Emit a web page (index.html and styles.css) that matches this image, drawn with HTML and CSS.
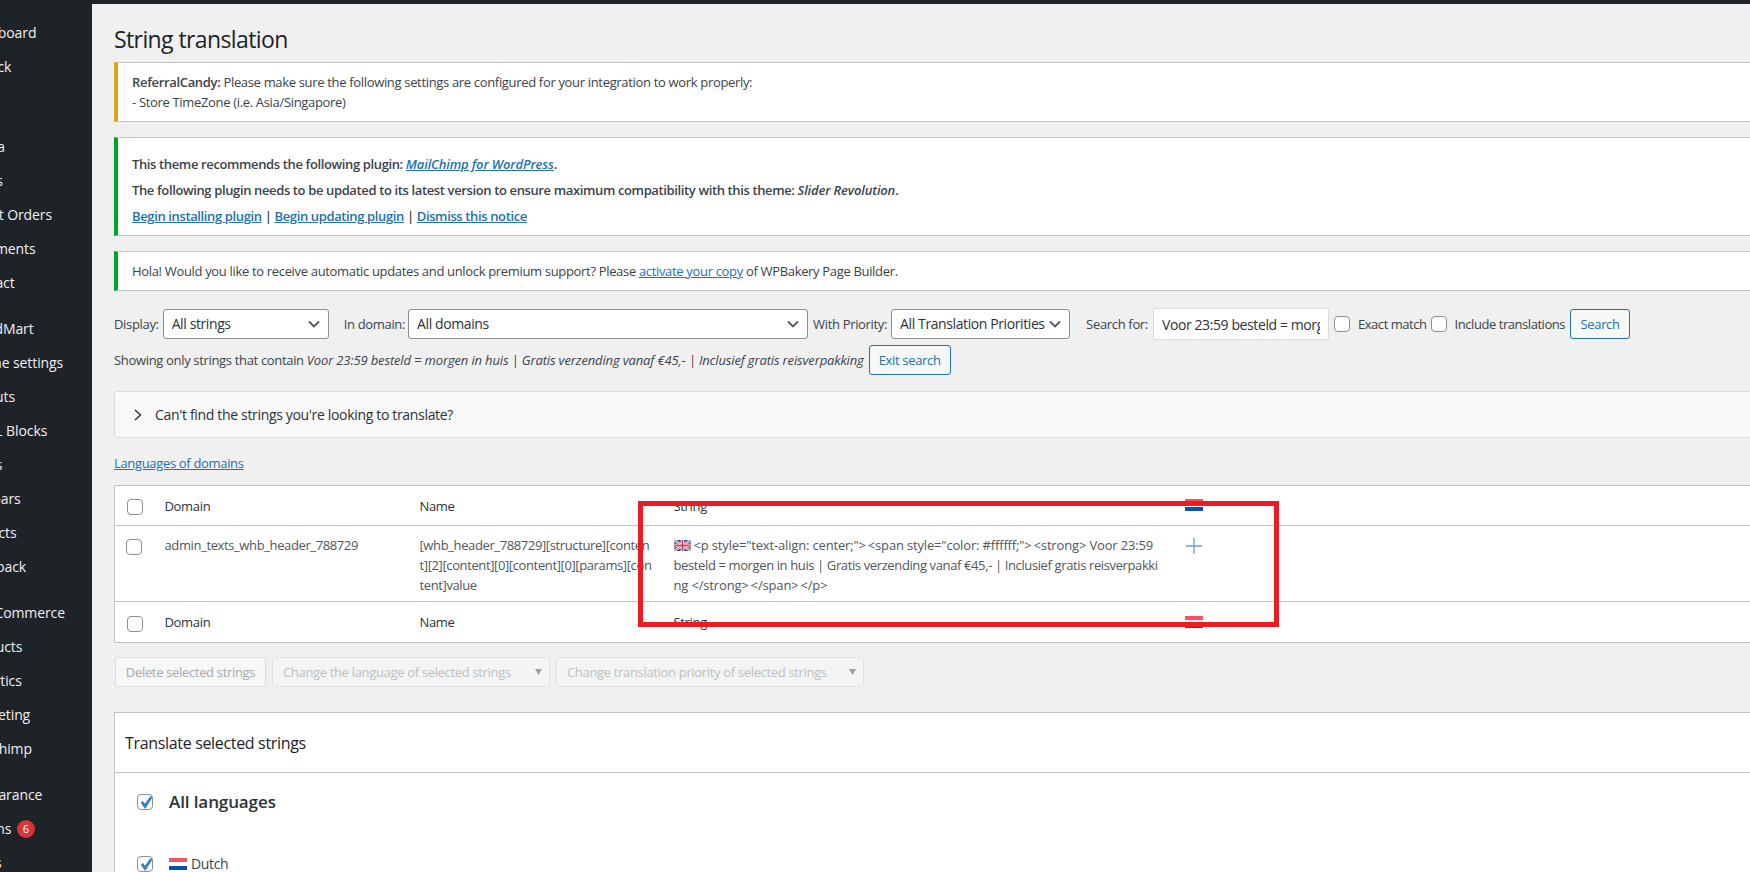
FILE: index.html
```html
<!DOCTYPE html>
<html lang="en">
<head>
    <meta charset="UTF-8">
    <meta name="viewport" content="width=device-width, initial-scale=1.0">
    <title>String translation</title>
    <link rel="stylesheet" href="styles.css">
</head>
<body>
    <div class="top-bar"></div>
    <div class="layout">
        <nav class="sidebar">
            <ul class="menu">
                <li>Dashboard</li>
                <li>Jetpack</li>
                <li class="gap-lg">Media</li>
                <li>Pages</li>
                <li>Smart Orders</li>
                <li>Comments</li>
                <li>Contact</li>
                <li class="gap">WoodMart</li>
                <li>Theme settings</li>
                <li>Layouts</li>
                <li>HTML Blocks</li>
                <li>Slides</li>
                <li>Sidebars</li>
                <li>Projects</li>
                <li>Feedback</li>
                <li class="gap">WooCommerce</li>
                <li>Products</li>
                <li>Analytics</li>
                <li>Marketing</li>
                <li>Mailchimp</li>
                <li class="gap">Appearance</li>
                <li>Plugins <span class="badge">6</span></li>
                <li>Users</li>
            </ul>
        </nav>

        <main class="wrap">
            <h1 class="page-title">String translation</h1>

            <div class="notice notice-warning">
                <p><strong class="medium">ReferralCandy:</strong> Please make sure the following settings are configured for your integration to work properly:<br>- Store TimeZone (i.e. Asia/Singapore)</p>
            </div>

            <div class="notice notice-success notice-tgm">
                <p class="medium">This theme recommends the following plugin: <a href="#"><em>MailChimp for WordPress</em></a>.</p>
                <p class="medium">The following plugin needs to be updated to its latest version to ensure maximum compatibility with this theme: <em>Slider Revolution</em>.</p>
                <p class="medium"><a href="#">Begin installing plugin</a> | <a href="#">Begin updating plugin</a> | <a href="#">Dismiss this notice</a></p>
            </div>

            <div class="notice notice-success notice-short">
                <p>Hola! Would you like to receive automatic updates and unlock premium support? Please <a href="#">activate your copy</a> of WPBakery Page Builder.</p>
            </div>

            <form class="filters">
                <label class="filter-label">Display:</label>
                <select class="select select-display"><option>All strings</option></select>
                <label class="filter-label label-domain">In domain:</label>
                <select class="select select-domain"><option>All domains</option></select>
                <label class="filter-label label-priority">With Priority:</label>
                <select class="select select-priority"><option>All Translation Priorities</option></select>
                <label class="filter-label label-search">Search for:</label>
                <input class="search-input" type="text" value="Voor 23:59 besteld = morgen in huis | Gratis verzending vanaf €45,- | Inclusief gratis reisverpakking">
                <input class="checkbox check-exact" type="checkbox">
                <label class="filter-label label-exact">Exact match</label>
                <input class="checkbox" type="checkbox">
                <label class="filter-label label-include">Include translations</label>
                <button class="btn btn-search" type="button">Search</button>
            </form>

            <div class="search-summary">
                <span>Showing only strings that contain <em>Voor 23:59 besteld = morgen in huis | Gratis verzending vanaf €45,- | Inclusief gratis reisverpakking</em></span>
                <button class="btn btn-exit" type="button">Exit search</button>
            </div>

            <div class="accordion">
                <svg class="chevron" width="8" height="12" viewBox="0 0 8 12"><path d="M1 1l5.5 5L1 11" fill="none" stroke="#1d2327" stroke-width="1.2"/></svg>
                <span>Can't find the strings you're looking to translate?</span>
            </div>

            <p class="domains-link"><a href="#">Languages of domains</a></p>

            <table class="strings-table">
                <colgroup>
                    <col class="col-check">
                    <col class="col-domain">
                    <col class="col-name">
                    <col class="col-string">
                    <col>
                </colgroup>
                <thead>
                    <tr>
                        <th class="cell-check"><input class="checkbox" type="checkbox"></th>
                        <th>Domain</th>
                        <th>Name</th>
                        <th>String</th>
                        <th class="cell-flag"><svg class="flag-nl" viewBox="0 0 18 12"><rect width="18" height="4" fill="#f9525f"/><rect y="4" width="18" height="4" fill="#fff"/><rect y="8" width="18" height="4" fill="#0b4fb3"/></svg></th>
                    </tr>
                </thead>
                <tbody>
                    <tr>
                        <td class="cell-check cell-check-row"><input class="checkbox" type="checkbox"></td>
                        <td class="cell-text">admin_texts_whb_header_788729</td>
                        <td class="cell-text">[whb_header_788729][structure][conten<br>t][2][content][0][content][0][params][con<br>tent]value</td>
                        <td class="cell-text">
                            <svg class="flag-uk" viewBox="0 0 18 12">
                                <rect width="18" height="12" fill="#2b4c9b"/>
                                <path d="M0 0l18 12M18 0L0 12" stroke="#fff" stroke-width="2.4"/>
                                <path d="M0 0l18 12M18 0L0 12" stroke="#d8414f" stroke-width="1"/>
                                <path d="M9 0v12M0 6h18" stroke="#fff" stroke-width="4"/>
                                <path d="M9 0v12M0 6h18" stroke="#d8414f" stroke-width="2"/>
                            </svg>
                            <span class="tag-text">&lt;p style="text-align: center;"&gt;&thinsp;&lt;span style="color: #ffffff;"&gt;&thinsp;&lt;strong&gt;&nbsp;Voor 23:59</span><br>besteld = morgen in huis | Gratis verzending vanaf €45,- | Inclusief gratis reisverpakki<br><span class="tag-text">ng &lt;/strong&gt;&thinsp;&lt;/span&gt;&thinsp;&lt;/p&gt;</span>
                        </td>
                        <td><svg class="plus" viewBox="0 0 16 16"><path d="M8 0v16M0 8h16" stroke="#6f9fca" stroke-width="1.3"/></svg></td>
                    </tr>
                </tbody>
                <tfoot>
                    <tr>
                        <th class="cell-check"><input class="checkbox" type="checkbox"></th>
                        <th>Domain</th>
                        <th>Name</th>
                        <th>String</th>
                        <th class="cell-flag"><svg class="flag-nl" viewBox="0 0 18 12"><rect width="18" height="4" fill="#f9525f"/><rect y="4" width="18" height="4" fill="#f0f0f1"/><rect y="8" width="18" height="4" fill="#0b4fb3"/></svg></th>
                    </tr>
                </tfoot>
            </table>

            <div class="bulk-actions">
                <button class="bulk-btn" type="button" disabled>Delete selected strings</button>
                <select class="bulk-select bulk-language" disabled><option>Change the language of selected strings</option></select>
                <select class="bulk-select bulk-priority" disabled><option>Change translation priority of selected strings</option></select>
            </div>

            <section class="translate-box">
                <h2 class="box-title">Translate selected strings</h2>
                <div class="box-body">
                    <div class="lang-row lang-all">
                        <input class="checkbox" type="checkbox" checked>
                        <strong>All languages</strong>
                    </div>
                    <div class="lang-row">
                        <input class="checkbox" type="checkbox" checked>
                        <svg class="flag-nl" viewBox="0 0 18 12"><rect width="18" height="4" fill="#f9525f"/><rect y="4" width="18" height="4" fill="#fff"/><rect y="8" width="18" height="4" fill="#0b4fb3"/></svg>
                        <span class="lang-name">Dutch</span>
                    </div>
                </div>
            </section>
        </main>
    </div>

    <div class="highlight-box"></div>
</body>
</html>
```

FILE: styles.css
```css
* {
    margin: 0;
    padding: 0;
    box-sizing: border-box;
}
html, body {
    width: 1750px;
    height: 872px;
    overflow: hidden;
}
body {
    font-family: "Open Sans", "Noto Sans", sans-serif;
    font-size: 13px;
    line-height: 20px;
    letter-spacing: -0.33px;
    background-color: #f0f0f1;
    color: #3c434a;
    position: relative;
}
a {
    color: #2271b1;
}
em {
    letter-spacing: -0.15px;
}
.top-bar {
    height: 4px;
    background-color: #1d2327;
}
.layout {
    display: flex;
    height: 868px;
}

/* sidebar, scrolled off to the left in the screenshot */
.sidebar {
    width: 92px;
    flex-shrink: 0;
    background-color: #1d2327;
    overflow: hidden;
    color: #f0f0f1;
    font-size: 14px;
    letter-spacing: -0.1px;
}
.menu {
    list-style: none;
    margin-left: -35px;
    padding-top: 12px;
}
.menu li {
    height: 34px;
    line-height: 34px;
    white-space: nowrap;
}
.menu .gap {
    margin-top: 12px;
}
.menu .gap-lg {
    margin-top: 46px;
}
.badge {
    display: inline-block;
    width: 18px;
    height: 18px;
    margin-left: 2px;
    border-radius: 9px;
    background-color: #d63638;
    color: #fff;
    font-size: 11px;
    line-height: 18px;
    text-align: center;
    vertical-align: 1px;
}

/* main column runs past the right edge of the window */
.wrap {
    flex: none;
    width: 1700px;
    padding-left: 22px;
}
.page-title {
    font-size: 23px;
    font-weight: 400;
    line-height: 30px;
    letter-spacing: -0.6px;
    color: #1d2327;
    padding-top: 20px;
    height: 58px;
}
.notice {
    background-color: #fff;
    border: 1px solid #c3c4c7;
    border-left-width: 4px;
    margin-bottom: 15px;
    padding: 9px 14px 9px 14px;
}
.notice-warning {
    border-left-color: #dba617;
    height: 60px;
}
.notice-success {
    border-left-color: #00a32a;
}
.notice-tgm {
    height: 99px;
    padding-top: 16px;
    letter-spacing: -0.37px;
}
.notice-tgm p {
    margin-bottom: 6px;
}
.notice-short {
    height: 40px;
    margin-bottom: 0;
}
.medium {
    font-weight: 600;
}

.filters {
    display: flex;
    align-items: center;
    height: 32px;
    margin-top: 17px;
    white-space: nowrap;
}
.select {
    height: 30px;
    border: 1px solid #8c8f94;
    border-radius: 3px;
    background: #fff url("data:image/svg+xml,%3Csvg xmlns='http://www.w3.org/2000/svg' width='12' height='8'%3E%3Cpath d='M1 1.5l5 5 5-5' fill='none' stroke='%2350575e' stroke-width='1.8'/%3E%3C/svg%3E") no-repeat right 8px center;
    appearance: none;
    font: inherit;
    font-size: 14px;
    letter-spacing: -0.4px;
    color: #2c3338;
    padding: 0 20px 0 8px;
}
.select-display {
    width: 166px;
    margin-left: 4px;
}
.label-domain {
    margin-left: 15px;
}
.select-domain {
    width: 400px;
    margin-left: 3px;
}
.label-priority {
    margin-left: 5px;
}
.select-priority {
    width: 179px;
    margin-left: 4px;
}
.label-search {
    margin-left: 16px;
}
.search-input {
    width: 176px;
    height: 32px;
    margin-left: 5px;
    border: 1px solid #dcdcde;
    border-radius: 2px;
    background-color: #fff;
    font: inherit;
    font-size: 14px;
    letter-spacing: -0.4px;
    color: #2c3338;
    padding: 0 8px;
}
.checkbox {
    appearance: none;
    width: 16px;
    height: 16px;
    flex-shrink: 0;
    border: 1px solid #8c8f94;
    border-radius: 4px;
    background-color: #fff;
    position: relative;
    display: inline-block;
}
.checkbox:checked::before {
    content: "";
    position: absolute;
    left: 1px;
    top: 0;
    width: 14px;
    height: 14px;
    background-color: #3582c4;
    clip-path: polygon(12% 55%, 28% 42%, 42% 62%, 82% 8%, 95% 20%, 44% 100%);
}
.check-exact {
    margin-left: 5px;
}
.label-exact {
    margin-left: 8px;
    margin-right: 4px;
    letter-spacing: -0.45px;
}
.label-include {
    margin-left: 8px;
    letter-spacing: -0.45px;
}
.btn {
    height: 30px;
    border: 1px solid #2271b1;
    border-radius: 3px;
    background-color: #f6f7f7;
    color: #2271b1;
    font: inherit;
    letter-spacing: inherit;
}
.btn-search {
    width: 60px;
    margin-left: 5px;
}
.btn-exit {
    width: 82px;
}
.search-summary {
    display: flex;
    align-items: center;
    gap: 5px;
    height: 30px;
    margin-top: 5px;
    white-space: nowrap;
}

.accordion {
    display: flex;
    align-items: center;
    height: 47px;
    margin-top: 16px;
    padding-left: 19px;
    background-color: #f9f9f9;
    border: 1px solid #dcdcde;
    border-radius: 3px 0 0 3px;
    font-size: 14px;
    color: #2c3338;
}
.chevron {
    margin-right: 13px;
}
.domains-link {
    margin-top: 15px;
    height: 20px;
}

.strings-table {
    width: 100%;
    margin-top: 12px;
    table-layout: fixed;
    border-collapse: collapse;
    background-color: #fff;
    border: 1px solid #c3c4c7;
}
.col-check {
    width: 50px;
}
.col-domain {
    width: 255px;
}
.col-name {
    width: 254px;
}
.col-string {
    width: 511px;
}
.strings-table th {
    height: 40px;
    text-align: left;
    font-weight: 400;
    color: #2c3338;
    vertical-align: middle;
}
.strings-table tfoot th {
    height: 41px;
}
.strings-table tbody td {
    height: 76px;
    vertical-align: top;
    padding-top: 9px;
    border-top: 1px solid #c3c4c7;
    border-bottom: 1px solid #c3c4c7;
}
.cell-check {
    padding-left: 12px;
}
.strings-table th .checkbox {
    vertical-align: middle;
}
.strings-table .cell-check-row {
    padding-left: 11px;
    padding-top: 13px;
}
.cell-text {
    white-space: nowrap;
    letter-spacing: -0.38px;
    color: #50575e;
}
.tag-text {
    letter-spacing: -0.16px;
}
.cell-flag .flag-nl {
    margin-top: -4px;
}
.flag-nl {
    width: 18px;
    height: 12px;
    display: inline-block;
    vertical-align: middle;
}
.flag-uk {
    width: 17px;
    height: 11px;
    display: inline-block;
    vertical-align: -1px;
}
.plus {
    width: 16px;
    height: 16px;
    margin-top: 3px;
    margin-left: 1px;
    display: block;
}

.bulk-actions {
    display: flex;
    gap: 6px;
    height: 30px;
    margin-top: 14px;
    padding-left: 1px;
}
.bulk-btn, .bulk-select {
    height: 30px;
    border: 1px solid #dcdcde;
    border-radius: 3px;
    background-color: #f6f7f7;
    color: #a7aaad;
    font: inherit;
    letter-spacing: inherit;
}
.bulk-btn {
    width: 151px;
}
.bulk-select {
    appearance: none;
    padding: 0 20px 0 10px;
    background: #f6f7f7 url("data:image/svg+xml,%3Csvg xmlns='http://www.w3.org/2000/svg' width='7' height='6'%3E%3Cpath d='M0 0h7L3.5 6z' fill='%23787c82'/%3E%3C/svg%3E") no-repeat right 7px center;
}
.bulk-language {
    width: 278px;
}
.bulk-priority {
    width: 308px;
}

.translate-box {
    margin-top: 25px;
    background-color: #fff;
    border: 1px solid #c3c4c7;
    height: 300px;
}
.box-title {
    height: 60px;
    padding: 20px 10px 0 10px;
    border-bottom: 1px solid #c3c4c7;
    font-size: 16px;
    font-weight: 500;
    line-height: 20px;
    color: #1d2327;
}
.box-body {
    padding: 19px 0 0 22px;
}
.lang-row {
    display: flex;
    align-items: center;
    gap: 16px;
}
.lang-all {
    height: 20px;
    margin-bottom: 42px;
}
.lang-all strong {
    font-size: 17px;
    font-weight: 600;
    letter-spacing: -0.1px;
    color: #2c3338;
}
.lang-name {
    margin-left: -12px;
    font-size: 14px;
}

.highlight-box {
    position: absolute;
    left: 638px;
    top: 501px;
    width: 641px;
    height: 126px;
    border: 5px solid #ed1c24;
}
```
